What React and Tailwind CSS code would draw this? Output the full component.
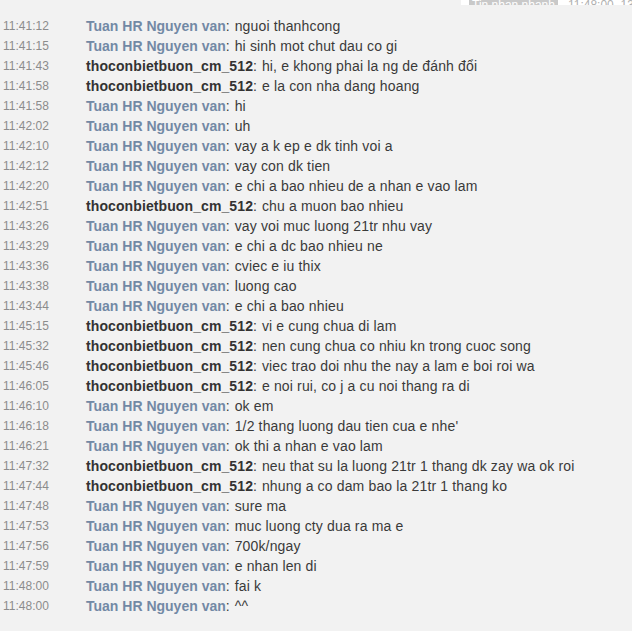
import React from "react";

const T = "Tuan HR Nguyen van";
const B = "thoconbietbuon_cm_512";

const rows = [
  ["11:41:12", T, "nguoi thanhcong"],
  ["11:41:15", T, "hi sinh mot chut dau co gi"],
  ["11:41:43", B, "hi, e khong phai la ng de đánh đổi"],
  ["11:41:58", B, "e la con nha dang hoang"],
  ["11:41:58", T, "hi"],
  ["11:42:02", T, "uh"],
  ["11:42:10", T, "vay a k ep e dk tinh voi a"],
  ["11:42:12", T, "vay con dk tien"],
  ["11:42:20", T, "e chi a bao nhieu de a nhan e vao lam"],
  ["11:42:51", B, "chu a muon bao nhieu"],
  ["11:43:26", T, "vay voi muc luong 21tr nhu vay"],
  ["11:43:29", T, "e chi a dc bao nhieu ne"],
  ["11:43:36", T, "cviec e iu thix"],
  ["11:43:38", T, "luong cao"],
  ["11:43:44", T, "e chi a bao nhieu"],
  ["11:45:15", B, "vi e cung chua di lam"],
  ["11:45:32", B, "nen cung chua co nhiu kn trong cuoc song"],
  ["11:45:46", B, "viec trao doi nhu the nay a lam e boi roi wa"],
  ["11:46:05", B, "e noi rui, co j a cu noi thang ra di"],
  ["11:46:10", T, "ok em"],
  ["11:46:18", T, "1/2 thang luong dau tien cua e nhe'"],
  ["11:46:21", T, "ok thi a nhan e vao lam"],
  ["11:47:32", B, "neu that su la luong 21tr 1 thang dk zay wa ok roi"],
  ["11:47:44", B, "nhung a co dam bao la 21tr 1 thang ko"],
  ["11:47:48", T, "sure ma"],
  ["11:47:53", T, "muc luong cty dua ra ma e"],
  ["11:47:56", T, "700k/ngay"],
  ["11:47:59", T, "e nhan len di"],
  ["11:48:00", T, "fai k"],
  ["11:48:00", T, "^^"],
];

export default function App() {
  return (
    <div
      className="w-[632px] h-[631px] bg-[#f2f2f2] overflow-hidden"
      style={{ fontFamily: '"Liberation Sans", Arial, sans-serif' }}
    >
      <div className="flex justify-end h-[5px] overflow-hidden">
        <div className="w-[171px] bg-white flex items-end pl-[8px] gap-[10px] text-[12px] leading-[14px] whitespace-nowrap">
          <span className="bg-[#c9c9c9] text-white px-[3px] -mb-[7px]">Tin nhan nhanh</span>
          <span className="text-[#b0b0b0] -mb-[7px]">11:48:00, 13 tháng</span>
        </div>
      </div>
      <div className="pt-[11px] pl-[3px]">
        {rows.map(([t, n, m], i) => (
          <div key={i} className="flex items-center h-[20px] whitespace-nowrap">
            <span className="w-[83px] shrink-0 text-[12px] text-[#8c8c8c]">{t}</span>
            <span className="text-[14px] text-[#3a3a3a] flex">
              <span
                className={
                  n === T
                    ? "font-bold text-[#7289a5]"
                    : "font-bold text-[#333333] tracking-[0.1px]"
                }
              >
                {n}
              </span>
              <span>:</span>
              <span className="pl-[5px] tracking-[0.15px]">{m}</span>
            </span>
          </div>
        ))}
      </div>
    </div>
  );
}
